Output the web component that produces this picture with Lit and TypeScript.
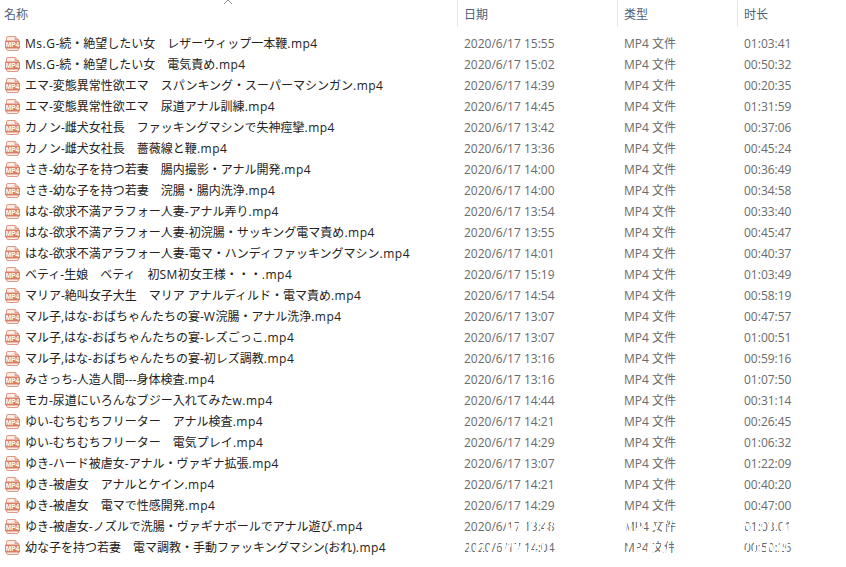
import { LitElement, html, css } from "lit";
import { customElement } from "lit/decorators.js";

const rows: [string, string, string][] = [
  ["Ms.G-続・絶望したい女　レザーウィップ一本鞭.mp4", "2020/6/17 15:55", "01:03:41"],
  ["Ms.G-続・絶望したい女　電気責め.mp4", "2020/6/17 15:02", "00:50:32"],
  ["エマ-変態異常性欲エマ　スパンキング・スーパーマシンガン.mp4", "2020/6/17 14:39", "00:20:35"],
  ["エマ-変態異常性欲エマ　尿道アナル訓練.mp4", "2020/6/17 14:45", "01:31:59"],
  ["カノン-雌犬女社長　ファッキングマシンで失神痙攣.mp4", "2020/6/17 13:42", "00:37:06"],
  ["カノン-雌犬女社長　薔薇線と鞭.mp4", "2020/6/17 13:36", "00:45:24"],
  ["さき-幼な子を持つ若妻　腸内撮影・アナル開発.mp4", "2020/6/17 14:00", "00:36:49"],
  ["さき-幼な子を持つ若妻　浣腸・腸内洗浄.mp4", "2020/6/17 14:00", "00:34:58"],
  ["はな-欲求不満アラフォー人妻-アナル弄り.mp4", "2020/6/17 13:54", "00:33:40"],
  ["はな-欲求不満アラフォー人妻-初浣腸・サッキング電マ責め.mp4", "2020/6/17 13:55", "00:45:47"],
  ["はな-欲求不満アラフォー人妻-電マ・ハンディファッキングマシン.mp4", "2020/6/17 14:01", "00:40:37"],
  ["ベティ-生娘　ベティ　初SM初女王様・・・.mp4", "2020/6/17 15:19", "01:03:49"],
  ["マリア-絶叫女子大生　マリア アナルディルド・電マ責め.mp4", "2020/6/17 14:54", "00:58:19"],
  ["マル子,はな-おばちゃんたちの宴-W浣腸・アナル洗浄.mp4", "2020/6/17 13:07", "00:47:57"],
  ["マル子,はな-おばちゃんたちの宴-レズごっこ.mp4", "2020/6/17 13:07", "01:00:51"],
  ["マル子,はな-おばちゃんたちの宴-初レズ調教.mp4", "2020/6/17 13:16", "00:59:16"],
  ["みさっち-人造人間---身体検査.mp4", "2020/6/17 13:16", "01:07:50"],
  ["モカ-尿道にいろんなブジー入れてみたw.mp4", "2020/6/17 14:44", "00:31:14"],
  ["ゆい-むちむちフリーター　アナル検査.mp4", "2020/6/17 14:21", "00:26:45"],
  ["ゆい-むちむちフリーター　電気プレイ.mp4", "2020/6/17 14:29", "01:06:32"],
  ["ゆき-ハード被虐女-アナル・ヴァギナ拡張.mp4", "2020/6/17 13:07", "01:22:09"],
  ["ゆき-被虐女　アナルとケイン.mp4", "2020/6/17 14:21", "00:40:20"],
  ["ゆき-被虐女　電マで性感開発.mp4", "2020/6/17 14:29", "00:47:00"],
  ["ゆき-被虐女-ノズルで洗腸・ヴァギナボールでアナル遊び.mp4", "2020/6/17 13:48", "01:03:01"],
  ["幼な子を持つ若妻　電マ調教・手動ファッキングマシン(おれ).mp4", "2020/6/17 14:04", "00:50:26"],
];

const split = (s: string) => s.split(/([A-Za-z0-9.]+)/);

@customElement("app-root")
export class AppRoot extends LitElement {
  static styles = css`
    :host { display: block; position: relative; width: 846px; height: 567px; overflow: hidden; background: #fff;
      font-family: "Open Sans", "Noto Sans CJK JP", sans-serif; font-size: 12px; }
    .grid { display: grid; grid-template-columns: 457px 160px 120px 109px; }
    .head { height: 27px; }
    .hc { color: #4c607a; padding-left: 6px; line-height: 29px; height: 27px; border-left: 1px solid #e8e8e8; box-sizing: border-box; position: relative; }
    .hc:first-child { border-left: 0; padding-left: 4px; }
    .caret { position: absolute; left: 223px; top: -1px; }
    .list { padding-top: 6px; }
    .row { height: 21px; line-height: 21px; }
    .name { display: flex; align-items: center; gap: 5px; padding-left: 5px; color: #222; white-space: nowrap; }
    .lat { letter-spacing: .5px; }
    .cell { color: #6a6a6a; padding-left: 7px; white-space: nowrap; }
    svg { display: block; flex: none; }
    .fade { position: absolute; height: 15px;
      background: repeating-linear-gradient(100deg, rgba(255,255,255,.95) 0 3px, transparent 3px 6px, rgba(255,255,255,.85) 6px 8px, transparent 8px 13px); }
    .f1 { left: 506px; top: 519px; width: 300px; }
    .f2 { left: 464px; top: 540px; width: 376px; }
  `;
  icon() {
    return html`<svg width="15" height="15" viewBox="0 0 15 15">
      <path d="M1.5 2 Q1.5 .5 3 .5 H10 L13.5 3.5 V13 Q13.5 14.5 12 14.5 H3 Q1.5 14.5 1.5 13 Z" fill="#fbeee9" stroke="#dd9a86"/>
      <path d="M10 .5 V3.5 H13.5" fill="#f3d3c8" stroke="#dd9a86"/>
      <rect x="0" y="4.5" width="15" height="8" rx="1" fill="#d98069"/>
      <text x="7.5" y="10.9" text-anchor="middle" font-size="6.6" font-weight="700" fill="#fff" font-family="Liberation Sans">MP4</text>
    </svg>`;
  }
  render() {
    return html`
      <div class="grid head">
        <div class="hc">名称
          <svg class="caret" width="10" height="6" viewBox="0 0 10 6"><path d="M1 5 L5 1 L9 5" fill="none" stroke="#8a8a8a"/></svg>
        </div>
        <div class="hc">日期</div><div class="hc">类型</div><div class="hc">时长</div>
      </div>
      <div class="list">
        ${rows.map(r => html`<div class="grid row">
          <div class="name">${this.icon()}<span>${split(r[0]).map((p, i) => i % 2 ? html`<span class="lat">${p}</span>` : p)}</span></div>
          <div class="cell">${r[1]}</div>
          <div class="cell">MP4 文件</div>
          <div class="cell">${r[2]}</div>
        </div>`)}
      </div>
      <div class="fade f1" aria-hidden="true"></div>
      <div class="fade f2" aria-hidden="true"></div>
    `;
  }
}
